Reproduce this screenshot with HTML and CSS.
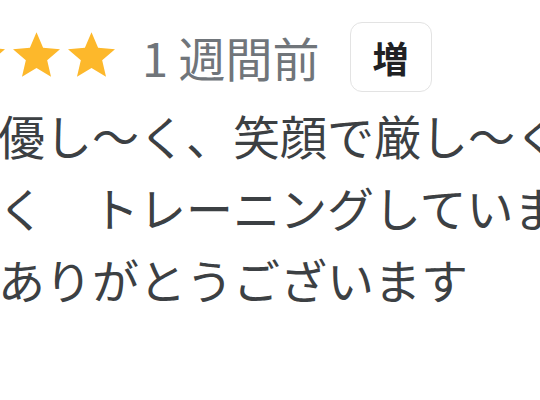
FILE: index.html
```html
<!DOCTYPE html>
<html lang="ja">
<head>
  <meta charset="UTF-8">
  <meta name="viewport" content="width=device-width, initial-scale=1.0">
  <title>口コミ</title>
  <link rel="stylesheet" href="styles.css">
</head>
<body>
  <div class="review">
    <div class="review-head">
      <div class="stars">
        <svg class="star" viewBox="2 2 20 19"><path d="M12 17.27L18.18 21l-1.64-7.03L22 9.24l-7.19-.61L12 2 9.19 8.63 2 9.24l5.46 4.73L5.82 21z"/></svg>
        <svg class="star" viewBox="2 2 20 19"><path d="M12 17.27L18.18 21l-1.64-7.03L22 9.24l-7.19-.61L12 2 9.19 8.63 2 9.24l5.46 4.73L5.82 21z"/></svg>
        <svg class="star" viewBox="2 2 20 19"><path d="M12 17.27L18.18 21l-1.64-7.03L22 9.24l-7.19-.61L12 2 9.19 8.63 2 9.24l5.46 4.73L5.82 21z"/></svg>
        <svg class="star" viewBox="2 2 20 19"><path d="M12 17.27L18.18 21l-1.64-7.03L22 9.24l-7.19-.61L12 2 9.19 8.63 2 9.24l5.46 4.73L5.82 21z"/></svg>
        <svg class="star" viewBox="2 2 20 19"><path d="M12 17.27L18.18 21l-1.64-7.03L22 9.24l-7.19-.61L12 2 9.19 8.63 2 9.24l5.46 4.73L5.82 21z"/></svg>
      </div>
      <span class="date">1 週間前</span>
      <span class="badge">増</span>
    </div>
    <div class="review-text">
      <p>優し〜く、笑顔で厳し〜く</p>
      <p>く　トレーニングしています</p>
      <p>ありがとうございます</p>
    </div>
  </div>
</body>
</html>
```

FILE: styles.css
```css
html, body { margin: 0; padding: 0; background: #fff; overflow: hidden; }
body { font-family: "Noto Sans CJK JP", "Noto Sans", sans-serif; width: 540px; height: 400px; }
.review { padding-top: 22px; }
.review-head { display: flex; align-items: center; height: 70px; }
.stars { display: flex; gap: 8px; margin-left: -152px; margin-bottom: 5px; }
.star { width: 47px; height: 45px; fill: #fdb82b; flex: none; }
.date { font-size: 47px; line-height: 72px; color: #70757a; margin-left: 27px; white-space: nowrap; }
.badge { display: flex; align-items: center; justify-content: center; width: 80px; height: 68px; margin-left: 30px; border: 1px solid #e3e3e3; border-radius: 12px; font-size: 36px; font-weight: 700; color: #202124; flex: none; }
.review-text { margin-top: 7px; margin-left: -2px; font-size: 47px; line-height: 72px; color: #3c4043; white-space: nowrap; }
.review-text p { margin: 0; }
```
